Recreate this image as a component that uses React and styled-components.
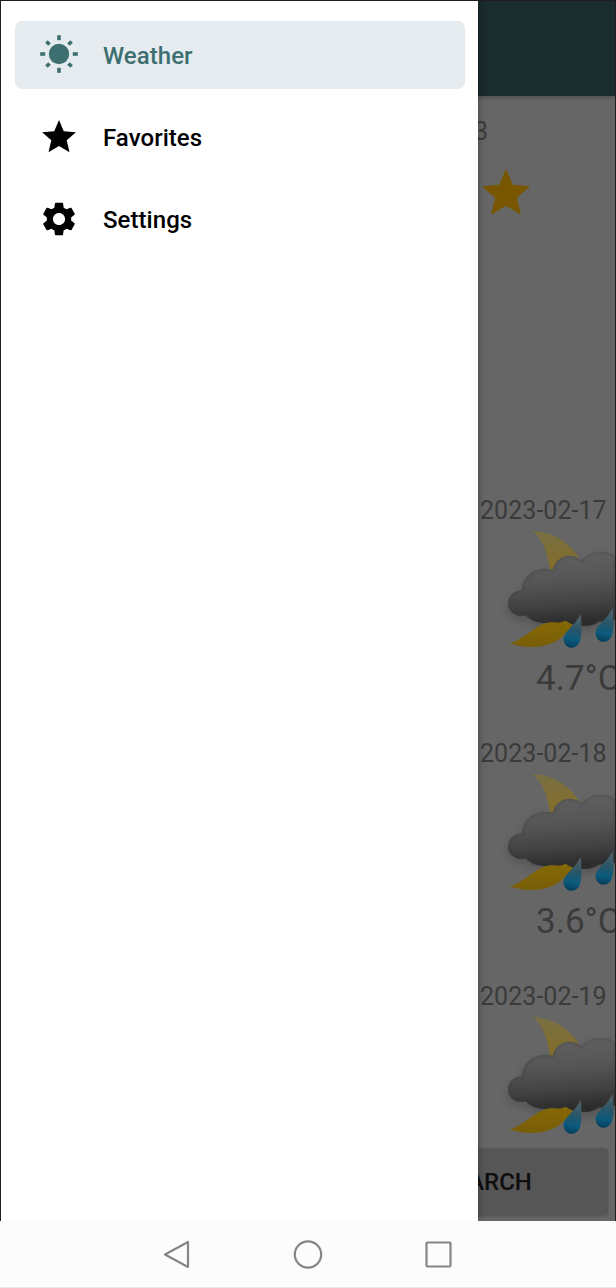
import React from "react";
import styled, { createGlobalStyle } from "styled-components";

const Global = createGlobalStyle`
  *, *::before, *::after { box-sizing: border-box; }
  body { margin: 0; font-family: Roboto, "Liberation Sans", sans-serif; }
`;

const Phone = styled.div`
  display: flex;
  flex-direction: column;
  width: 616px;
  height: 1288px;
  overflow: hidden;
  background: #fcfcfc;
`;

const Stage = styled.div`
  position: relative;
  height: 1221px;
  flex: none;
  border: solid #1e1e20;
  border-width: 1px 1px 0 1px;
  overflow: hidden;
`;

const Page = styled.main`
  display: flex;
  flex-direction: column;
  height: 100%;
  background: #666;
  color: #3b3b3b;
`;

const TopBar = styled.header`
  flex: none;
  height: 95px;
  background: #1a2c2e;
  box-shadow: 0 1px 5px rgba(0, 0, 0, 0.3);
`;

const Summary = styled.section`
  display: flex;
  flex-direction: column;
  align-items: flex-end;
  height: 397px;
  padding-top: 20px;
`;

const Updated = styled.div`
  margin-right: 127px;
  font-size: 25px;
  line-height: 32px;
`;

const FavoriteStar = styled.svg`
  width: 58px;
  height: 58px;
  margin: 16px 80px 0 0;
`;

const Forecast = styled.section`
  flex: 1;
  min-height: 0;
  padding: 1px 0 0 479px;
  overflow: hidden;
`;

const Day = styled.article`
  height: 243px;
  white-space: nowrap;
`;

const DateLine = styled.div`
  font-size: 25px;
  line-height: 33px;
  letter-spacing: 0.05px;
`;

const Temperature = styled.div`
  margin: 4px 0 0 56px;
  font-size: 35px;
  line-height: 40px;
`;

const WeatherArt = styled.svg`
  display: block;
  width: 116px;
  height: 130px;
  margin: -2px 0 0 20px;
`;

const Footer = styled.div`
  flex: none;
  display: flex;
  justify-content: flex-end;
  height: 73px;
  padding: 0 7px 5px;
`;

const SearchButton = styled.button`
  width: 244px;
  height: 67px;
  border: 0;
  border-radius: 4px;
  background: #565656;
  box-shadow: 0 1px 3px rgba(0, 0, 0, 0.2);
  color: #0e0e0e;
  font: 500 24px/1 Roboto, sans-serif;
`;

const Drawer = styled.nav`
  position: absolute;
  inset: 0 auto 0 0;
  display: flex;
  flex-direction: column;
  gap: 14px;
  width: 477.4px;
  padding: 20px 13.5px 20px 13.5px;
  background: #fff;
  box-shadow: 0 0 8px rgba(0, 0, 0, 0.35);
`;

const MenuItem = styled.a`
  display: flex;
  align-items: center;
  gap: 24.5px;
  height: 68px;
  padding-left: 24.5px;
  border-radius: 7px;
  background: ${(p) => (p.$active ? "#e5ebee" : "transparent")};
  color: ${(p) => (p.$active ? "#3d6f70" : "#000")};
  font-size: 24px;
  font-weight: 500;
`;

const MenuIcon = styled.svg`
  flex: none;
  width: 40px;
  height: 40px;
  fill: currentColor;
`;

const MenuLabel = styled.span`
  position: relative;
  top: 1px;
  left: -0.5px;
  letter-spacing: 0.05px;
`;

const SystemBar = styled.footer`
  display: flex;
  justify-content: center;
  align-items: center;
  gap: 98.5px;
  flex: 1;
  border-bottom: 1px solid #e8e8e8;
`;

const SystemIcon = styled.svg`
  width: 32px;
  height: 32px;
  fill: none;
  stroke: #858585;
  stroke-width: 2.2;
  stroke-linejoin: round;
`;

const STAR = "M12 17.27L18.18 21l-1.64-7.03L22 9.24l-7.19-.61L12 2 9.19 8.63 2 9.24l5.46 4.73L5.82 21z";
const GEAR =
  "M19.14 12.94c.04-.3.06-.61.06-.94 0-.32-.02-.64-.07-.94l2.03-1.58c.18-.14.23-.41.12-.61l-1.92-3.32c-.12-.22-.37-.29-.59-.22l-2.39.96c-.5-.38-1.03-.7-1.62-.94l-.36-2.54c-.04-.24-.24-.41-.48-.41h-3.84c-.24 0-.43.17-.47.41l-.36 2.54c-.59.24-1.13.57-1.62.94l-2.39-.96c-.22-.08-.47 0-.59.22L2.74 8.87c-.12.21-.08.47.12.61l2.03 1.58c-.05.3-.09.63-.09.94s.02.64.07.94l-2.03 1.58c-.18.14-.23.41-.12.61l1.92 3.32c.12.22.37.29.59.22l2.39-.96c.5.38 1.03.7 1.62.94l.36 2.54c.05.24.24.41.48.41h3.84c.24 0 .44-.17.47-.41l.36-2.54c.59-.24 1.13-.56 1.62-.94l2.39.96c.22.08.47 0 .59-.22l1.92-3.32c.12-.22.07-.47-.12-.61l-2.01-1.58zM12 15.6c-1.98 0-3.6-1.62-3.6-3.6s1.62-3.6 3.6-3.6 3.6 1.62 3.6 3.6-1.62 3.6-3.6 3.6z";

function SunIcon() {
  return (
    <MenuIcon viewBox="0 0 40 40">
      <circle cx="20" cy="19" r="10.2" />
      {[0, 45, 90, 135, 180, 225, 270, 315].map((a) => (
        <rect
          key={a}
          x="18.2"
          y={a % 90 ? 1.2 : 0.2}
          width="3.6"
          height={a % 90 ? 4.4 : 5}
          transform={`rotate(${a} 20 19)`}
        />
      ))}
    </MenuIcon>
  );
}

const CLOUD =
  "M24 236C24 212 42 197 66 196C66 158 98 130 138 131Q150 131 158 134C164 108 184 93 208 92Q230 92 245 107C256 90 278 80 302 80Q328 80 348 94V282C330 294 310 288 296 290C278 302 262 304 242 303C222 302 208 295 198 287C178 296 162 290 148 292C122 298 90 288 78 271C48 278 24 260 24 236Z";

function Drop({ x, y, fill }) {
  return (
    <path
      transform={`translate(${x} ${y})`}
      d="M52 0C56 34 55 72 48 87C38 108 9 108 2 84C-6 56 32 42 52 0Z"
      fill={fill}
    />
  );
}

function RainyNight({ id }) {
  const ref = (name) => `url(#${name}-${id})`;
  return (
    <WeatherArt viewBox="0 0 348 390">
      <defs>
        <linearGradient id={`cloud-${id}`} x1="0" y1="0" x2="0.1" y2="1">
          <stop offset="0" stopColor="#626262" />
          <stop offset="0.45" stopColor="#555" />
          <stop offset="0.75" stopColor="#424242" />
          <stop offset="1" stopColor="#2c2c2c" />
        </linearGradient>
        <linearGradient id={`moon-${id}`} x1="0" y1="0" x2="0" y2="1">
          <stop offset="0" stopColor="#786f44" />
          <stop offset="0.26" stopColor="#826e2e" />
          <stop offset="0.8" stopColor="#846806" />
          <stop offset="1" stopColor="#785d08" />
        </linearGradient>
        <linearGradient id={`drop-${id}`} x1="0.5" y1="0" x2="0.4" y2="1">
          <stop offset="0" stopColor="#566166" />
          <stop offset="0.45" stopColor="#27566a" />
          <stop offset="0.75" stopColor="#0b5a7c" />
          <stop offset="1" stopColor="#063e5b" />
        </linearGradient>
        <filter id={`soft-${id}`} x="-20%" y="-20%" width="140%" height="140%">
          <feGaussianBlur stdDeviation="14" />
        </filter>
        <filter id={`rim-${id}`}>
          <feGaussianBlur stdDeviation="4" />
        </filter>
        <clipPath id={`shape-${id}`}>
          <path d={CLOUD} />
        </clipPath>
      </defs>
      <path d={CLOUD} fill="#393939" opacity="0.4" transform="translate(0 12)" filter={ref("soft")} />
      <path
        transform="translate(-4 0)"
        d="M101 18C169 20 220 58 247 110C283 210 240 292 187 338C150 370 76 373 33 354C76 346 108 296 160 290C170 234 161 159 151 118C143 77 134 44 101 18Z"
        fill={ref("moon")}
      />
      <path d={CLOUD} fill={ref("cloud")} />
      <g clipPath={ref("shape")}>
        <path d={CLOUD} fill="none" stroke="#383838" strokeWidth="7" opacity="0.4" filter={ref("rim")} />
      </g>
      <Drop x={190} y={266} fill={ref("drop")} />
      <Drop x={286} y={248} fill={ref("drop")} />
    </WeatherArt>
  );
}

const days = [
  { date: "2023-02-17", temp: "4.7°C" },
  { date: "2023-02-18", temp: "3.6°C" },
  { date: "2023-02-19", temp: "" },
];

export default function App() {
  return (
    <Phone>
      <Global />
      <Stage>
        <Page>
          <TopBar />
          <Summary>
            <Updated>3</Updated>
            <FavoriteStar viewBox="0 0 24 24">
              <path d={STAR} fill="#785700" />
            </FavoriteStar>
          </Summary>
          <Forecast>
            {days.map((day, i) => (
              <Day key={day.date}>
                <DateLine>{day.date}</DateLine>
                <RainyNight id={i} />
                <Temperature>{day.temp}</Temperature>
              </Day>
            ))}
          </Forecast>
          <Footer>
            <SearchButton>SEARCH</SearchButton>
          </Footer>
        </Page>
        <Drawer>
          <MenuItem $active>
            <SunIcon />
            <MenuLabel>Weather</MenuLabel>
          </MenuItem>
          <MenuItem>
            <MenuIcon viewBox="0.2 0.2 23.6 23.6">
              <path d={STAR} />
            </MenuIcon>
            <MenuLabel>Favorites</MenuLabel>
          </MenuItem>
          <MenuItem>
            <MenuIcon viewBox="0.2 0.2 23.6 23.6">
              <path d={GEAR} />
            </MenuIcon>
            <MenuLabel>Settings</MenuLabel>
          </MenuItem>
        </Drawer>
      </Stage>
      <SystemBar>
        <SystemIcon viewBox="0 0 32 32">
          <path d="M26 4V29L3 16.5Z" />
        </SystemIcon>
        <SystemIcon viewBox="0 0 32 32">
          <circle cx="16" cy="16.5" r="13.2" />
        </SystemIcon>
        <SystemIcon viewBox="0 0 32 32">
          <rect x="3.5" y="4.5" width="24" height="24" rx="1" />
        </SystemIcon>
      </SystemBar>
    </Phone>
  );
}
